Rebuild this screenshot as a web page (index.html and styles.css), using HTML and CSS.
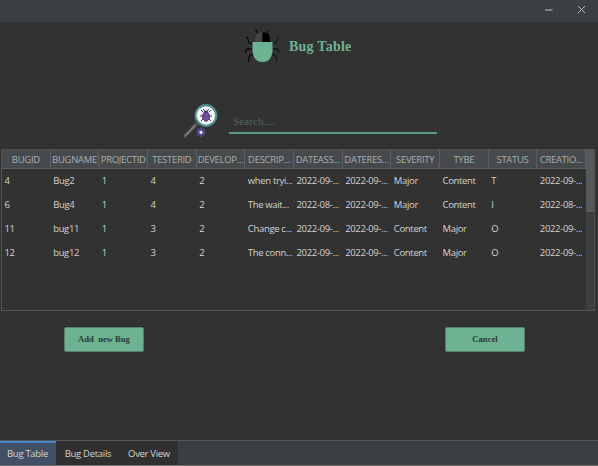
FILE: index.html
```html
<!DOCTYPE html>
<html lang="en">
<head>
<meta charset="utf-8">
<title>Bug Table</title>
<link rel="stylesheet" href="styles.css">
</head>
<body>
<div class="window">
  <header class="titlebar">
    <svg class="min" width="9" height="9" viewBox="0 0 9 9"><path d="M1 5h7.5" stroke="#aaafb1" stroke-width="1.2"/></svg>
    <svg width="9" height="9" viewBox="0 0 9 9"><path d="M1 1l7 7M8 1L1 8" stroke="#b5babc" stroke-width="1"/></svg>
  </header>
  <main>
    <div class="brand">
      <svg width="38" height="36" viewBox="0 0 38 36">
        <g fill="none" stroke="#090909" stroke-width="1.3">
          <path d="M8.500 15L5.500 14Q4 13 4 10L2.500 8M8 20H4Q2 20 1.500 24M9 25L5.500 27Q4.500 29 4.500 33M14 5L12.500 1.500L11 1"/>
          <path stroke="#171717" d="M28.500 15L31.500 14Q33 13 33 10L35 8M29 20H32Q34.500 20 35.500 24M28 25L31.500 27Q32.500 29 33 33M23 5L24.500 1.500L26 1"/>
        </g>
        <path d="M11.500 13V9Q12 3 18.500 3V13Z" fill="#444"/>
        <path d="M18.500 3Q25.500 3 26 9V13H18.500Z" fill="#000"/>
        <path d="M8.500 13H28.500V23Q27 33 18.500 33T8.500 23Z" fill="#6db293"/>
      </svg>
      <h1>Bug Table</h1>
    </div>
    <div class="search">
      <svg width="36" height="36" viewBox="0 0 36 36">
        <path d="M13 21.500L2 33" stroke="#465461" stroke-width="3.6" stroke-linecap="round"/>
        <path d="M12.500 22L2 33" stroke="#8b7e75" stroke-width="1.4"/>
        <circle cx="23" cy="12.500" r="10.300" fill="#f7f5fa" stroke="#4b8e87" stroke-width="2.200"/>
        <path d="M14.500 17Q11 10 17 5" fill="none" stroke="#83c2b7" stroke-width="1"/>
        <path d="M20 9l-2-2M26 9l2-2M19.500 13h-2.500M26.500 13H29M20 16l-2 2M26 16l2 2M21.500 8l-1-2M24.500 8l1-2" stroke="#343762" stroke-width="1"/>
        <ellipse cx="23" cy="13.500" rx="3.500" ry="4.700" fill="#794ba0" stroke="#393866"/>
        <path d="M20.500 9.500Q23 5.500 25.500 9.500Z" fill="#303458"/>
        <path d="M18 24.500V34M13.300 29.300H22.700M14.600 26L21.400 32.600M21.400 26L14.600 32.600" stroke="#55458b" stroke-width="2"/>
        <circle cx="18" cy="29.300" r="2.300" fill="#eee9f3" stroke="#5a4790" stroke-width="1.400"/>
      </svg>
      <div class="field">Search....</div>
    </div>
    <section class="grid-panel">
      <div class="grid">
        <div class="row head"><span>BUGID</span><span>BUGNAME</span><span>PROJECTID</span><span>TESTERID</span><span>DEVELOP...</span><span>DESCRIP...</span><span>DATEASS...</span><span>DATERES...</span><span>SEVERITY</span><span>TYBE</span><span>STATUS</span><span>CREATIO...</span></div>
        <div class="row"><span>4</span><span>Bug2</span><span>1</span><span>4</span><span>2</span><span>when tryi...</span><span>2022-09-...</span><span>2022-09-...</span><span>Major</span><span>Content</span><span>T</span><span>2022-09-...</span></div>
        <div class="row"><span>6</span><span>Bug4</span><span>1</span><span>4</span><span>2</span><span>The wait...</span><span>2022-08-...</span><span>2022-09-...</span><span>Major</span><span>Content</span><span>I</span><span>2022-08-...</span></div>
        <div class="row"><span>11</span><span>bug11</span><span>1</span><span>3</span><span>2</span><span>Change c...</span><span>2022-09-...</span><span>2022-09-...</span><span>Content</span><span>Major</span><span>O</span><span>2022-09-...</span></div>
        <div class="row"><span>12</span><span>bug12</span><span>1</span><span>3</span><span>2</span><span>The conn...</span><span>2022-09-...</span><span>2022-09-...</span><span>Content</span><span>Major</span><span>O</span><span>2022-09-...</span></div>
      </div>
      <div class="scroll"><div class="thumb"></div></div>
    </section>
    <div class="actions"><button>Add&nbsp; new Bug</button><button>Cancel</button></div>
  </main>
  <nav class="tabs"><span class="active">Bug Table</span><span>Bug Details</span><span>Over View</span></nav>
</div>
</body>
</html>
```

FILE: styles.css
```css
* { box-sizing: border-box; }
body { margin: 0; background: #323232; }
.window {
  width: 598px; height: 466px;
  display: flex; flex-direction: column;
  background: #323232; color: #d2d2d2;
  font: 9.5px/12px "Open Sans", "Noto Sans", sans-serif;
  letter-spacing: -0.3px;
  border-bottom: 1px solid #707273;
  overflow: hidden;
}
.titlebar {
  height: 22px; flex: none;
  display: flex; justify-content: flex-end; align-items: center;
  gap: 24px; padding: 0 12px 3px 0;
  background: #3c3f41;
}
main { flex: 1; display: flex; flex-direction: column; }
.brand { height: 50px; display: flex; padding: 7px 0 0 243.5px; }
.brand h1 {
  margin: 9px 0 0 7.5px;
  color: #6db293;
  font: bold 14px/18px "Liberation Serif", serif;
  letter-spacing: 0.25px;
}
.search { height: 77px; display: flex; padding: 31px 0 0 183px; }
.field {
  width: 208px; height: 31px;
  margin-left: 10px; padding: 10px 0 0 4px;
  border-bottom: 2px solid #5b9b80;
  color: #51695e;
  font: 11px/16px "Liberation Serif", serif;
  letter-spacing: 0.12px;
}
.grid-panel {
  width: 594px; height: 162px; margin-left: 1px;
  display: flex;
  border: 1px solid #505253;
}
.grid { width: 584px; }
.row {
  height: 24px;
  display: grid; grid-template-columns: repeat(12, 1fr);
  align-items: center;
}
.row span {
  min-width: 0; padding: 0 0 0 2.5px;
  white-space: nowrap;
}
.row:not(.head) span { letter-spacing: -0.34px; }
.row.head {
  height: 19px;
  background: #464a4c; color: #a9acad;
  border-bottom: 1px solid #5c6062;
}
.row.head span {
  padding: 4px 0 0; height: 18px;
  border-right: 1px solid #5b5f61;
  text-align: center;
}
.scroll { width: 8px; background: #3c3f41; }
.thumb { height: 62px; background: #54595c; }
.actions { display: flex; justify-content: space-between; padding: 16px 73px 0 64px; }
button {
  width: 80px; height: 25px; padding: 0 0 1px;
  border: 1px solid #5c7d6e; border-radius: 2px;
  background: #6db293; color: #293b34;
  font: bold 8.6px/12px "Liberation Serif", serif;
  letter-spacing: 0;
}
.tabs {
  height: 25px; flex: none;
  display: flex;
  background: #3c3f41;
  border-top: 1px solid #55585a;
}
.tabs span {
  padding: 7px 0 0 3px; width: 61px;
  background: #303030; text-align: center;
}
.tabs .active {
  width: 56px; padding: 5px 1px 0 0;
  background: #425066; border-top: 2px solid #4a88c7;
}
```
